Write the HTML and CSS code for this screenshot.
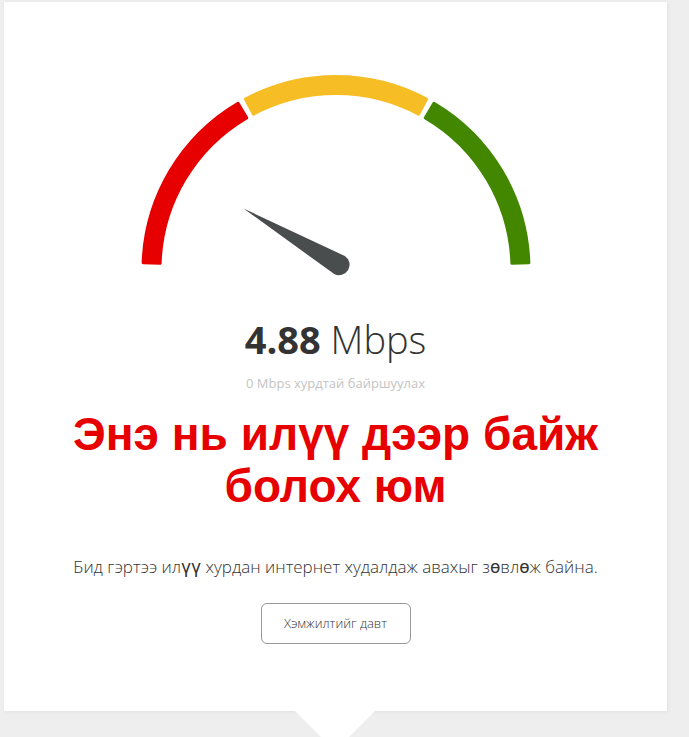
FILE: index.html
```html
<!DOCTYPE html>
<html lang="mn">
<head>
<meta charset="UTF-8" />
<meta name="viewport" content="width=device-width, initial-scale=1.0"/>
<title>Хурдны хэмжилт</title>
<link rel="stylesheet" href="styles.css">
</head>
<body>

<div class="result-card">
  <svg class="gauge" width="400" height="215" viewBox="0 0 400 215">
    <path class="seg seg-red" d="M7.12,197.76 A193,193 0 0 1 102.04,38.21 L110.67,52.85 A176,176 0 0 0 24.11,198.36 Z"/>
    <path class="seg seg-yellow" d="M109.39,34.09 A193,193 0 0 1 290.61,34.09 L282.63,49.10 A176,176 0 0 0 117.37,49.10 Z"/>
    <path class="seg seg-green" d="M297.96,38.21 A193,193 0 0 1 392.88,197.76 L375.89,198.36 A176,176 0 0 0 289.33,52.85 Z"/>
    <path class="needle" d="M107.5,143.5 L208.8,190.95 A10.5,10.5 0 0 1 198.2,209.05 Z"/>
  </svg>

  <div class="speed"><strong>4.88</strong> Mbps</div>
  <div class="upload">0 Mbps хурдтай байршуулах</div>

  <h1 class="verdict">Энэ нь илүү дээр байж<br>болох юм</h1>

  <p class="advice">Бид гэртээ ил<span class="alt">үү</span> хурдан интернет худалдаж авахыг з<span class="alt">ө</span>вл<span class="alt">ө</span>ж байна.</p>

  <button class="retry">Хэмжилтийг давт</button>
</div>
<div class="card-pointer"></div>

</body>
</html>
```

FILE: styles.css
```css
body {
  margin: 0;
  background: #eeeeee;
  font-family: "Open Sans", Arial, sans-serif;
  color: #333333;
}

.result-card {
  box-sizing: border-box;
  width: 663px;
  height: 709px;
  margin: 2px 0 0 4px;
  padding-top: 63px;
  background: #ffffff;
  box-shadow: 1px 1px 4px rgba(0, 0, 0, 0.06);
  display: flex;
  flex-direction: column;
  align-items: center;
  text-align: center;
}

/* little pointer under the card */
.card-pointer {
  width: 0;
  height: 0;
  margin-left: 295px;
  border-left: 40px solid transparent;
  border-right: 40px solid transparent;
  border-top: 40px solid #ffffff;
}

.gauge {
  display: block;
}

.seg {
  stroke-width: 3;
  stroke-linejoin: round;
}

.seg-red {
  fill: #e60000;
  stroke: #e60000;
}

.seg-yellow {
  fill: #f6bd25;
  stroke: #f6bd25;
}

.seg-green {
  fill: #438700;
  stroke: #438700;
}

.needle {
  fill: #4a4d4e;
}

.speed {
  margin-top: 37px;
  font-size: 38px;
  line-height: 1.2;
  font-weight: 300;
  color: #333333;
}

.speed strong {
  font-weight: 700;
}

.upload {
  margin-top: 11px;
  font-size: 13px;
  line-height: 1.4;
  color: #c4c4c4;
}

.verdict {
  margin: 16px 0 0;
  font-family: "Liberation Sans", Arial, sans-serif;
  font-size: 46px;
  line-height: 52px;
  font-weight: bold;
  color: #e60000;
}

.advice {
  margin: 43px 0 0;
  font-size: 17px;
  line-height: 1.4;
  font-weight: 300;
  color: #333333;
}

.advice .alt {
  font-family: "DejaVu Sans", sans-serif;
  font-weight: normal;
}

.retry {
  margin-top: 23px;
  width: 150px;
  height: 41px;
  background: #ffffff;
  border: 1px solid #999999;
  border-radius: 6px;
  font-family: "Open Sans", Arial, sans-serif;
  font-size: 13px;
  font-weight: 300;
  color: #333333;
  cursor: pointer;
}
```
